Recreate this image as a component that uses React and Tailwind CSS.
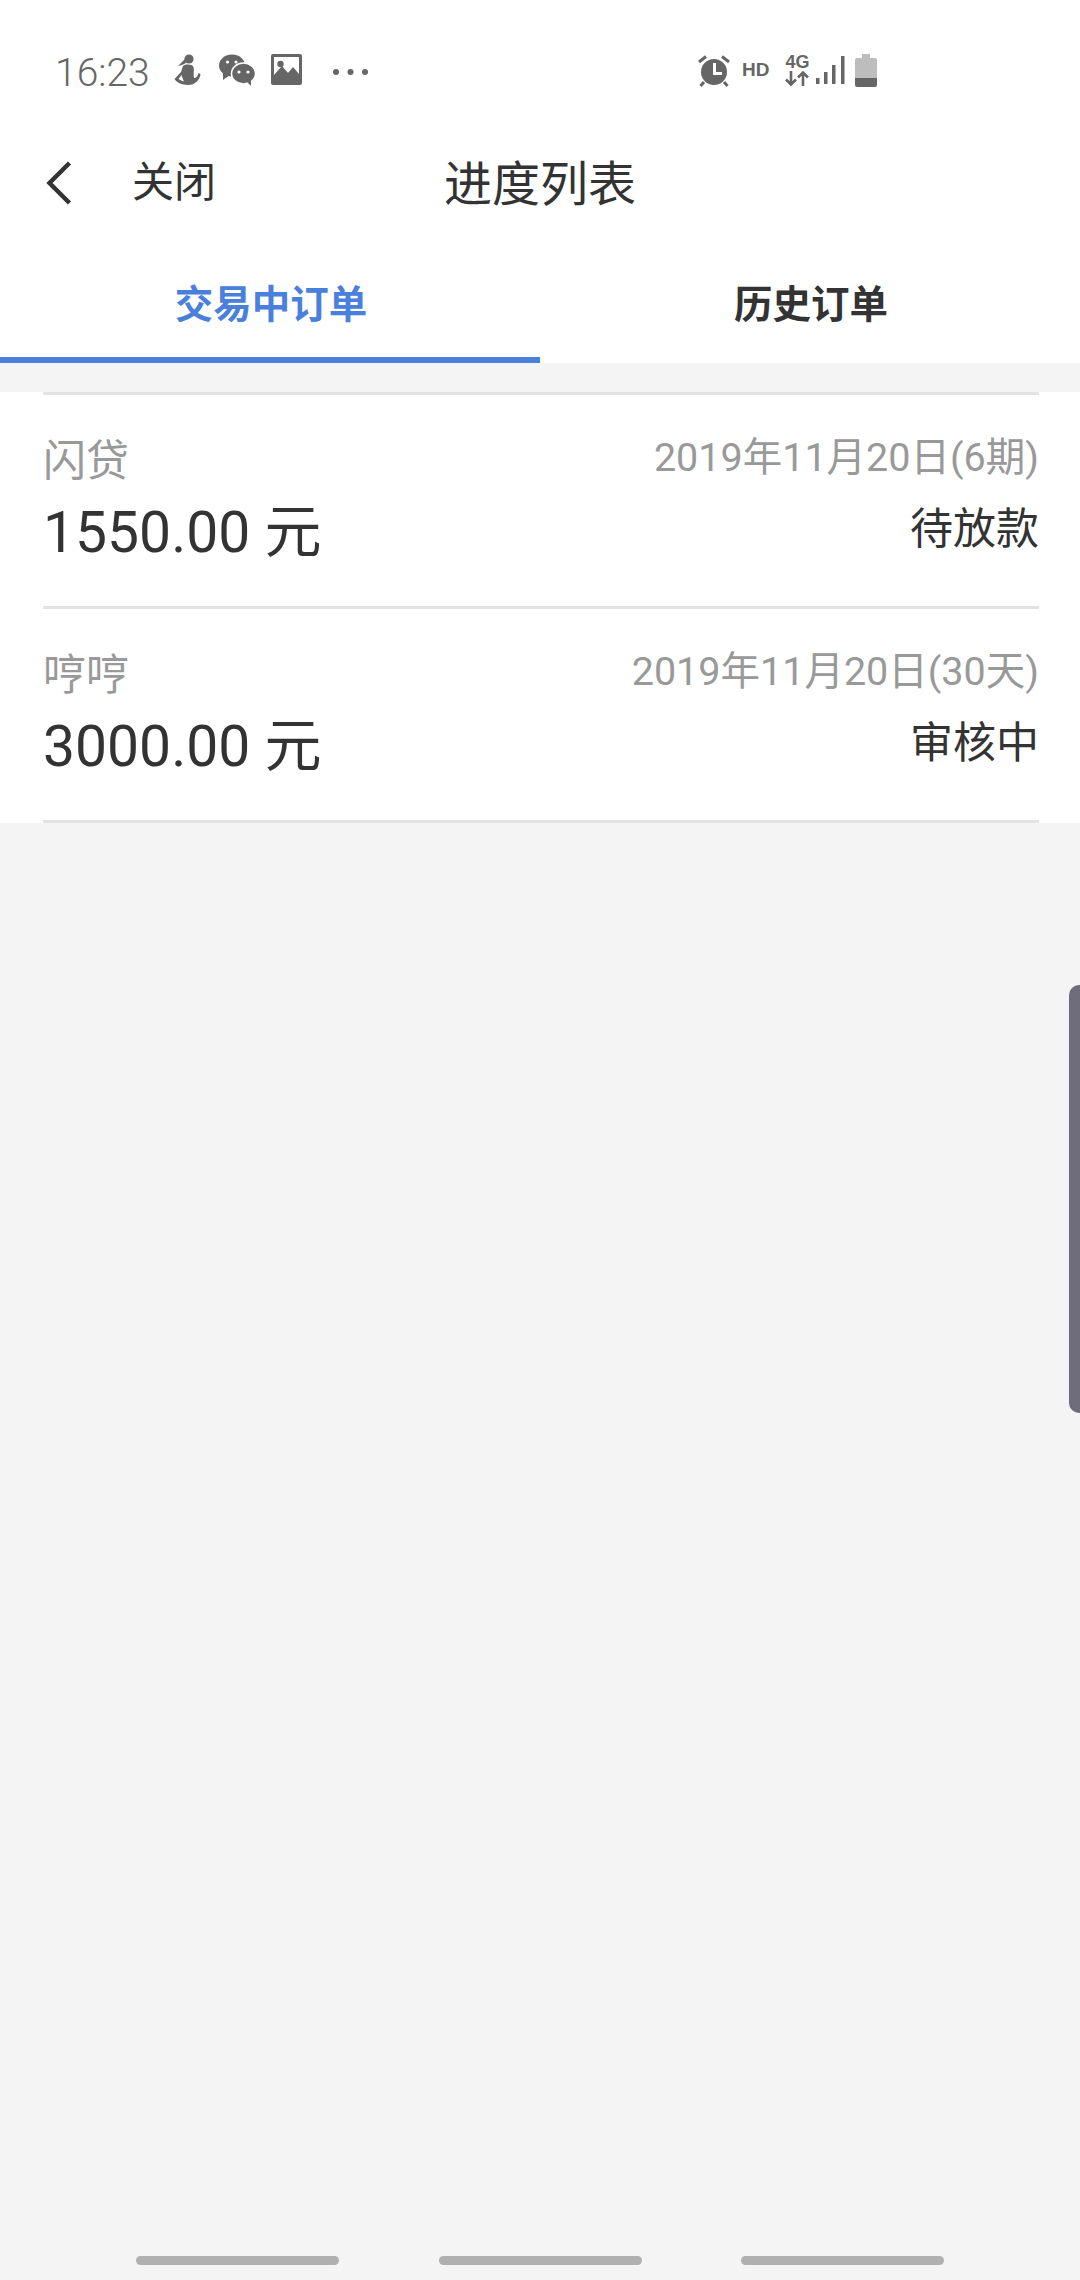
const orders = [
  { name: "闪贷", date: "2019年11月20日(6期)", amount: "1550.00 元", status: "待放款" },
  { name: "哼哼", date: "2019年11月20日(30天)", amount: "3000.00 元", status: "审核中" },
];

function RunnerIcon() {
  return (
    <svg width="27" height="32" viewBox="0 0 27 32" fill="#666666">
      <circle cx="15" cy="5" r="4.6" />
      <path d="M11 5 L4 12 L8 11 L12 9 Z" />
      <path d="M9 12 C12 10 18 10 19.5 13 C20.5 16 19 20 20 24 C22 24 24 22 24.5 19 L26.5 20 C26 26 21 31 14 31 C8 31 2 28 0.5 25 L7 18 C8 16 8 14 9 12 Z M7.5 21 L4.5 25 C6 26 8 27 10 27.5 C9 25 8 23 7.5 21 Z" fillRule="evenodd" />
    </svg>
  );
}

function WechatIcon() {
  return (
    <svg width="36" height="32" viewBox="0 0 36 32">
      <ellipse cx="13" cy="11.5" rx="13" ry="11" fill="#666666" />
      <path d="M4 18 L4 26 L11 21 Z" fill="#666666" />
      <ellipse cx="24.5" cy="19.5" rx="12" ry="10.5" fill="#666666" stroke="#ffffff" strokeWidth="1.5" />
      <path d="M28 28 L32 32 L32 25 Z" fill="#666666" />
      <circle cx="8.5" cy="8" r="1.6" fill="#ffffff" />
      <circle cx="17" cy="8" r="1.6" fill="#ffffff" />
      <circle cx="20" cy="18" r="1.6" fill="#ffffff" />
      <circle cx="29" cy="18" r="1.6" fill="#ffffff" />
    </svg>
  );
}

function ImageIcon() {
  return (
    <svg width="31" height="31" viewBox="0 0 31 31">
      <path fillRule="evenodd" fill="#666666" d="M2 0 H29 A2 2 0 0 1 31 2 V29 A2 2 0 0 1 29 31 H2 A2 2 0 0 1 0 29 V2 A2 2 0 0 1 2 0 Z M3 3 V21 L11 12 L17 19 L22 13 L28 20 V3 Z" />
      <circle cx="9.5" cy="10" r="3.2" fill="#666666" />
    </svg>
  );
}

function DotsIcon() {
  return (
    <svg width="35" height="6" viewBox="0 0 35 6" fill="#666666">
      <circle cx="3" cy="3" r="3" />
      <circle cx="17.5" cy="3" r="3" />
      <circle cx="32" cy="3" r="3" />
    </svg>
  );
}

function AlarmIcon() {
  return (
    <svg width="34" height="33" viewBox="0 0 34 33">
      <circle cx="17" cy="18" r="13" fill="#666666" />
      <path d="M16 9 H19 V18 H25 V21 H16 Z" fill="#ffffff" />
      <path d="M2 8 L9 2.5 M32 8 L25 2.5 M7 28 L3.5 32 M27 28 L30.5 32" stroke="#666666" strokeWidth="3" fill="none" />
    </svg>
  );
}

function NetworkIcon() {
  return (
    <div className="flex w-[24px] flex-col items-center">
      <span className="text-[18px] leading-[14px] font-bold text-[#666666] font-['Liberation_Sans',sans-serif]">4G</span>
      <svg className="mt-[2px]" width="24" height="15" viewBox="0 0 24 15" fill="none" stroke="#666666" strokeWidth="2.6">
        <path d="M6 0 V13 M1 8.5 L6 13.5 L11 8.5" />
        <path d="M18 15 V2 M13 6.5 L18 1.5 L23 6.5" />
      </svg>
    </div>
  );
}

function SignalIcon() {
  return (
    <svg width="29" height="28" viewBox="0 0 29 28" fill="#666666">
      <rect x="0" y="22" width="3.5" height="6" />
      <rect x="8" y="16" width="3.5" height="12" />
      <rect x="16" y="9" width="3.5" height="19" />
      <rect x="25" y="0" width="3.5" height="28" />
    </svg>
  );
}

function BatteryIcon() {
  return (
    <svg width="22" height="33" viewBox="0 0 22 33">
      <path d="M7 0 H15 V4 H20 A2 2 0 0 1 22 6 V24 H0 V6 A2 2 0 0 1 2 4 H7 Z" fill="#bdbdbd" />
      <path d="M0 24 H22 V31 A2 2 0 0 1 20 33 H2 A2 2 0 0 1 0 31 Z" fill="#666666" />
    </svg>
  );
}

function StatusBar() {
  return (
    <div className="flex h-[130px] items-start pt-[54px] pl-[55px] text-[#666666]">
      <span className="mt-[1px] w-[119px] text-[39px] leading-[36px] font-light">16:23</span>
      <div><RunnerIcon /></div>
      <div className="ml-[18px]"><WechatIcon /></div>
      <div className="ml-[16px]"><ImageIcon /></div>
      <div className="mt-[15px] ml-[31px]"><DotsIcon /></div>
      <div className="ml-[329px]"><AlarmIcon /></div>
      <span className="mt-[7px] ml-[11px] text-[19px] leading-[17px] font-bold font-['Liberation_Sans',sans-serif]">HD</span>
      <div className="mt-[1px] ml-[16px]"><NetworkIcon /></div>
      <div className="mt-[2px] ml-[7px]"><SignalIcon /></div>
      <div className="ml-[10px]"><BatteryIcon /></div>
    </div>
  );
}

function NavBar() {
  return (
    <div className="grid h-[106px] grid-cols-[1fr_auto_1fr] items-center text-[#333333]">
      <div className="flex items-center pl-[46px]">
        <svg width="26" height="44" viewBox="0 0 26 44" fill="none" stroke="#333333" strokeWidth="4.5">
          <path d="M23.5 2 L3.5 22 L23.5 42" />
        </svg>
        <span className="ml-[60px] text-[42px] leading-[50px]">关闭</span>
      </div>
      <h1 className="mt-[3px] text-[48px] leading-[56px] font-normal">进度列表</h1>
      <div />
    </div>
  );
}

function Tabs() {
  return (
    <div className="grid h-[127px] grid-cols-2 text-center text-[38.5px] leading-[46px] font-bold">
      <div className="border-b-[6px] border-[#4a80dc] pt-[46px] pl-[2px] text-[#4a80dc]">交易中订单</div>
      <div className="pt-[46px] pl-[2px] text-[#333333]">历史订单</div>
    </div>
  );
}

function OrderRow({ order }) {
  return (
    <div className="flex h-[214px] justify-between border-b-[3px] border-[#e3e3e3]">
      <div className="pt-[41px]">
        <div className="text-[43px] leading-[50px] text-[#999999]">{order.name}</div>
        <div className="mt-[14px] text-[57px] leading-[66px] text-[#333333]">{order.amount}</div>
      </div>
      <div className="pt-[38px] text-right">
        <div className="text-[39.5px] leading-[50px] text-[#999999]">{order.date}</div>
        <div className="mt-[21px] text-[43px] leading-[50px] text-[#333333]">{order.status}</div>
      </div>
    </div>
  );
}

export default function App() {
  return (
    <div className="relative flex h-[2280px] w-[1080px] flex-col overflow-hidden bg-[#f4f4f4] font-['Roboto','Noto_Sans_CJK_SC',sans-serif]">
      <div className="bg-white">
        <StatusBar />
        <NavBar />
        <Tabs />
      </div>

      <div className="mt-[29px] bg-white pr-[41px] pl-[43px]">
        <div className="border-t-[3px] border-[#e3e3e3]">
          {orders.map((order) => (
            <OrderRow key={order.name} order={order} />
          ))}
        </div>
      </div>

      {/* edge panel handle */}
      <div className="absolute top-[985px] right-0 h-[428px] w-[11px] rounded-l-[10px] bg-[#6f6d7b]" />

      <div className="mt-auto flex justify-between pr-[136px] pb-[15px] pl-[136px]">
        <div className="h-[9px] w-[203px] rounded-full bg-[#b0b0b0]" />
        <div className="h-[9px] w-[203px] rounded-full bg-[#b0b0b0]" />
        <div className="h-[9px] w-[203px] rounded-full bg-[#b0b0b0]" />
      </div>
    </div>
  );
}
